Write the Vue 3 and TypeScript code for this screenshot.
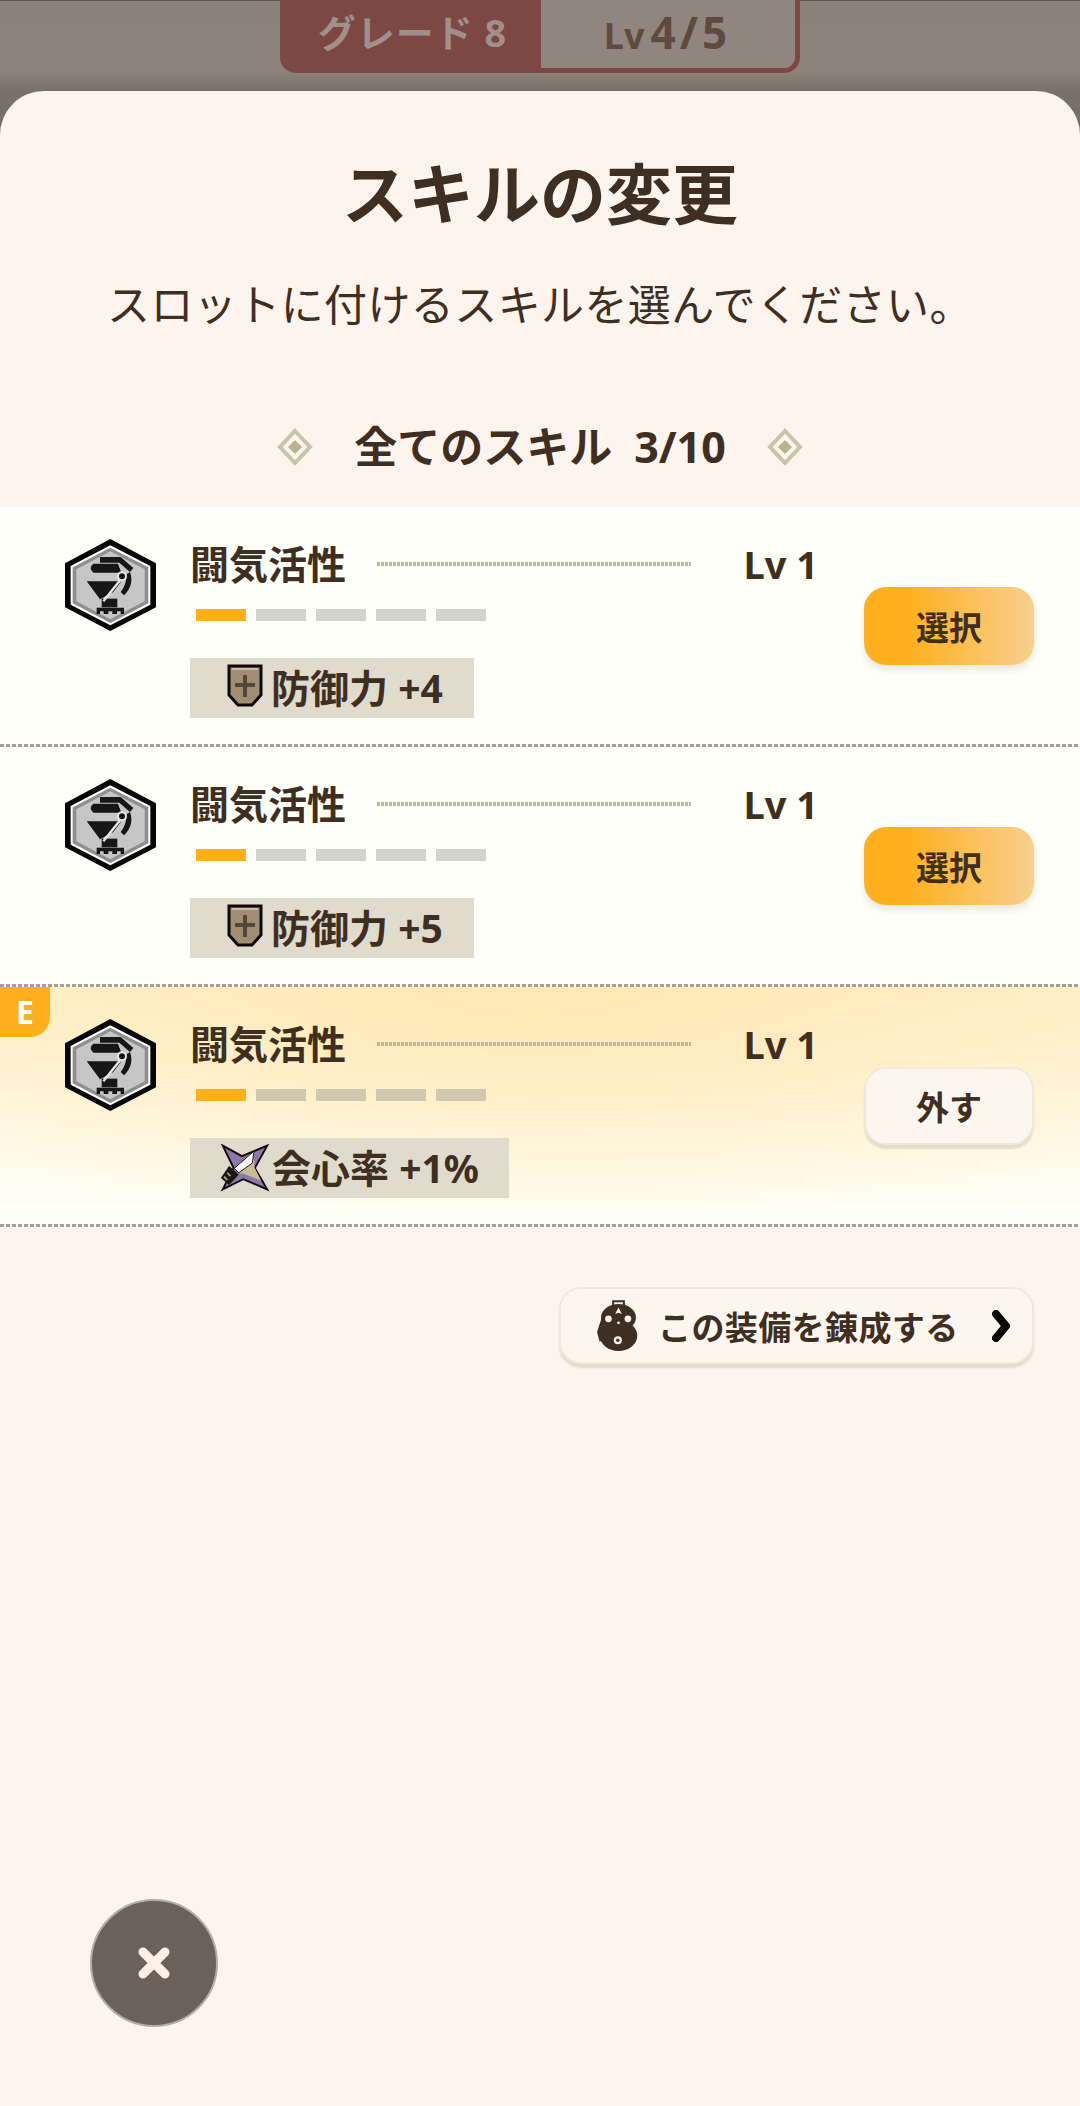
<script setup lang="ts">
interface Skill {
  stat: string
  statIcon: 'shield' | 'crit'
  equipped: boolean
}

const skills: Skill[] = [
  { stat: '防御力 +4', statIcon: 'shield', equipped: false },
  { stat: '防御力 +5', statIcon: 'shield', equipped: false },
  { stat: '会心率 +1%', statIcon: 'crit', equipped: true },
]
</script>

<template>
  <div class="page">
    <div class="grade">
      <span class="grade__left">グレード 8</span>
      <span class="grade__right">Lv<span class="grade__num">4/5</span></span>
    </div>

    <main class="sheet">
      <h1 class="sheet__title">スキルの変更</h1>
      <p class="sheet__sub">スロットに付けるスキルを選んでください。</p>

      <div class="section">
        <svg class="section__mark" viewBox="0 0 36 38">
          <path d="M18 3 33 19 18 35 3 19Z" fill="none" stroke="#cbc4aa" stroke-width="4" />
          <path d="M18 12 25 19 18 26 11 19Z" fill="#bdb08c" />
        </svg>
        <h2 class="section__title">全てのスキル<span class="section__count">3/10</span></h2>
        <svg class="section__mark" viewBox="0 0 36 38">
          <path d="M18 3 33 19 18 35 3 19Z" fill="none" stroke="#cbc4aa" stroke-width="4" />
          <path d="M18 12 25 19 18 26 11 19Z" fill="#bdb08c" />
        </svg>
      </div>

      <div class="list">
        <template v-for="(skill, i) in skills" :key="i">
          <div class="row" :class="{ 'row--on': skill.equipped }">
            <span v-if="skill.equipped" class="row__badge">E</span>

            <svg class="row__icon" viewBox="45 27 273 276">
              <polygon points="181,27 318,100 318,232 181,303 45,232 45,100" fill="#050505" />
              <polygon points="181,46 301,108 301,224 181,286 62,224 62,108" fill="#fff" />
              <polygon points="181,53 295,112 295,220 181,279 68,220 68,112" fill="#8f8f8f" />
              <polygon points="181,64 284,118 284,214 181,268 79,214 79,118" fill="#c6c6c6" />
              <path d="M150 81H212L250 114 240 126 208 98H150Z" fill="#161616" />
              <path d="M130 101H204L214 128H130Q114 114 130 101Z" fill="#161616" />
              <path d="M110 154H214L190 186 150 208Z" fill="#161616" />
              <path d="M240 126Q254 165 222 196L212 186Q232 160 228 134Z" fill="#161616" />
              <path d="M155 206H202V232H155Z" fill="#161616" />
              <path d="M140 233H222V252H212V244H201V252H187V244H175V252H161V244H150V252H140Z" fill="#161616" />
              <path d="M160 214 214 146" stroke="#e8e8e8" stroke-width="7" fill="none" />
              <circle cx="216" cy="139" r="12" fill="#161616" stroke="#e8e8e8" stroke-width="6" />
            </svg>

            <div class="row__body">
              <div class="row__head">
                <span class="row__name">闘気活性</span>
                <span class="row__dots"></span>
                <span class="row__lv">Lv 1</span>
              </div>
              <div class="pips">
                <span v-for="n in 5" :key="n" class="pip" :class="{ 'pip--on': n === 1 }"></span>
              </div>
              <div class="stat" :class="{ 'stat--wide': skill.statIcon === 'crit' }">
                <svg v-if="skill.statIcon === 'shield'" class="stat__shield" viewBox="0 0 36 43">
                  <path d="M2 2H34V31L25 41H11L2 31Z" fill="#a08d73" stroke="#0c0a08" stroke-width="3" />
                  <path d="M5 5H31" stroke="#c9bda8" stroke-width="2" />
                  <path d="M18 11V33M8 21H28" stroke="#55463a" stroke-width="4" fill="none" />
                </svg>
                <svg v-else class="stat__crit" viewBox="60 40 155 150">
                  <polygon points="68,45 128,78 207,45 168,115 207,182 132,150 68,182 102,115" fill="#8d78a8" stroke="#0d0a10" stroke-width="6" />
                  <polygon points="165,85 168,115 188,155 132,132 118,132" fill="#c9bb94" />
                  <polygon points="166,62 160,100 118,130 104,116" fill="#fff" stroke="#17130f" stroke-width="3" />
                  <polygon points="88,108 118,136 88,168 62,146" fill="#1b1713" />
                  <path d="M82 130 92 141M72 142 82 152" stroke="#b9ad8f" stroke-width="5" />
                </svg>
                <span>{{ skill.stat }}</span>
              </div>
            </div>

            <button class="row__btn" :class="{ 'row__btn--off': skill.equipped }">
              {{ skill.equipped ? '外す' : '選択' }}
            </button>
          </div>
          <div class="rule"></div>
        </template>
      </div>

      <div class="refine-wrap">
        <button class="refine">
          <svg class="refine__icon" viewBox="25 0 125 152">
            <path d="M76 16V4H108V16" fill="none" stroke="#3f2e22" stroke-width="6" />
            <ellipse cx="92" cy="52" rx="52" ry="40" fill="#3f2e22" />
            <ellipse cx="92" cy="106" rx="56" ry="46" fill="#3f2e22" />
            <path d="M46 40 28 95 36 125 52 110Z" fill="#3f2e22" />
            <path d="M92 22 102 42 92 38 82 42Z" fill="#fdf6ef" />
            <circle cx="62" cy="56" r="10" fill="#fdf6ef" />
            <circle cx="120" cy="56" r="10" fill="#fdf6ef" />
            <circle cx="92" cy="68" r="4" fill="#fdf6ef" />
            <circle cx="90" cy="120" r="12" fill="#fdf6ef" />
            <circle cx="90" cy="120" r="5" fill="#3f2e22" />
          </svg>
          <span class="refine__text">この装備を錬成する</span>
          <svg class="refine__chev" viewBox="0 0 18 32">
            <path d="M4 4 14 16 4 28" fill="none" stroke="#050505" stroke-width="8" stroke-linecap="round" stroke-linejoin="round" />
          </svg>
        </button>
      </div>

      <button class="close" aria-label="閉じる">
        <svg viewBox="0 0 34 34" class="close__x">
          <path d="M6 6 28 28M28 6 6 28" stroke="#fdf0e4" stroke-width="9" stroke-linecap="round" />
        </svg>
      </button>
    </main>
  </div>
</template>

<style scoped>
.page {
  height: 2106px;
  display: flex;
  flex-direction: column;
  overflow: hidden;
  font-family: "Noto Sans", "Noto Sans CJK JP", sans-serif;
  color: #3f2e22;
  background: linear-gradient(#5c5550 0, #5c5550 1px, #8b8178 1px, #8e847b 70px, #7b7067 91px);
}

.grade {
  align-self: center;
  display: flex;
  width: 520px;
  height: 73px;
  margin-left: -1px;
  flex-shrink: 0;
  box-sizing: border-box;
  border: 5px solid #7d4743;
  border-top: 0;
  border-radius: 0 0 16px 16px;
  overflow: hidden;
  font-weight: 700;
  font-size: 38px;
  line-height: 64px;
}

.grade__left {
  width: 256px;
  background: #7d4743;
  color: #a08f8a;
  text-align: center;
  letter-spacing: 1px;
}

.grade__right {
  flex: 1;
  background: #91867f;
  color: #5f4a3f;
  text-align: center;
  font-size: 36px;
}

.grade__num {
  margin-left: 6px;
  font-size: 44px;
  letter-spacing: 4px;
}

.sheet {
  flex: 1;
  display: flex;
  flex-direction: column;
  background: #fdf4ed;
  border-radius: 44px 44px 0 0;
  margin-top: 18px;
}

.sheet__title {
  margin: 0;
  padding-top: 57px;
  font-size: 66px;
  line-height: 90px;
  font-weight: 700;
  text-align: center;
}

.sheet__sub {
  margin: 36px 0 0;
  font-size: 43px;
  line-height: 62px;
  font-weight: 400;
  text-align: center;
  letter-spacing: 0.4px;
}

.section {
  display: flex;
  justify-content: center;
  align-items: center;
  gap: 41px;
  height: 60px;
  margin-top: 81px;
}

.section__mark {
  width: 36px;
  height: 38px;
}

.section__title {
  margin: 0;
  font-size: 43px;
  line-height: 60px;
  font-weight: 700;
}

.section__count {
  margin-left: 22px;
}

.list {
  margin-top: 30px;
}

.row {
  position: relative;
  display: flex;
  align-items: center;
  height: 237px;
  padding: 0 46px 0 65px;
  background: #fefff8;
}

.row--on {
  background:
    radial-gradient(ellipse 75% 100% at 50% 0, #ffe8b4 0%, rgba(255, 232, 180, 0) 100%),
    linear-gradient(#fff0cc, #fefff8 100%);
}

.rule {
  height: 3px;
  background: repeating-linear-gradient(90deg, #a5a196 0 4px, transparent 4px 6px);
}

.row__badge {
  position: absolute;
  left: 0;
  top: 0;
  width: 50px;
  height: 50px;
  background: #ffb01c;
  border-radius: 0 0 20px 0;
  color: #fff;
  font-size: 32px;
  line-height: 50px;
  font-weight: 700;
  text-align: center;
}

.row__icon {
  align-self: flex-start;
  width: 91px;
  height: 92px;
  margin-top: 32px;
  flex-shrink: 0;
}

.row__body {
  align-self: flex-start;
  width: 628px;
  margin-left: 34px;
  padding-top: 31px;
}

.row__head {
  display: flex;
  align-items: center;
  height: 52px;
}

.row__name {
  font-size: 39px;
  font-weight: 700;
  line-height: 52px;
}

.row__dots {
  width: 314px;
  height: 4px;
  margin-left: 31px;
  background: repeating-linear-gradient(90deg, #bdb59c 0 3px, transparent 3px 4px);
}

.row__lv {
  margin-left: auto;
  font-size: 38px;
  font-weight: 700;
  line-height: 52px;
}

.pips {
  display: flex;
  gap: 10px;
  margin: 19px 0 0 6px;
}

.pip {
  width: 50px;
  height: 12px;
  background: #d2d4cd;
}

.row--on .pip {
  background: #d1c8b0;
}

.pip.pip--on,
.row--on .pip.pip--on {
  background: #ffb01c;
}

.stat {
  display: flex;
  align-items: center;
  gap: 8px;
  width: 284px;
  height: 60px;
  margin-top: 37px;
  padding-left: 37px;
  box-sizing: border-box;
  background: #dfdccd;
  font-size: 39px;
  line-height: 56px;
  font-weight: 700;
}

.stat--wide {
  width: 319px;
  padding-left: 30px;
  gap: 2px;
}

.stat__shield {
  width: 36px;
  height: 43px;
  margin-top: -6px;
}

.stat__crit {
  width: 50px;
  height: 48px;
}

.row__btn {
  margin-left: auto;
  width: 170px;
  height: 78px;
  padding: 0;
  border: 0;
  border-radius: 22px;
  background: linear-gradient(90deg, #ffb01c 25%, #f8cf8f 100%);
  box-shadow: 0 5px 6px rgba(120, 100, 70, 0.14);
  font-family: inherit;
  font-size: 33px;
  font-weight: 700;
  color: #3f2e22;
}

.row__btn--off {
  background: #fdf6ef;
  border: 2px solid #f2e8da;
  box-shadow: 0 4px 2px #e6dccb;
}

.refine-wrap {
  display: flex;
  justify-content: flex-end;
  margin-top: 60px;
  padding-right: 46px;
}

.refine {
  display: flex;
  align-items: center;
  width: 475px;
  height: 77px;
  padding: 0 22px 0 35px;
  border: 2px solid #f2e8da;
  border-radius: 22px;
  background: #fdf6ef;
  box-shadow: 0 4px 2px #e6dccb;
  font-family: inherit;
  color: #3f2e22;
}

.refine__icon {
  width: 42px;
  height: 51px;
  flex-shrink: 0;
}

.refine__text {
  margin-left: 20px;
  font-size: 33px;
  font-weight: 700;
  letter-spacing: 0.4px;
  white-space: nowrap;
}

.refine__chev {
  width: 18px;
  height: 32px;
  margin-left: auto;
}

.close {
  display: flex;
  align-items: center;
  justify-content: center;
  width: 128px;
  height: 128px;
  margin: auto 0 79px 90px;
  padding: 0;
  box-sizing: border-box;
  background: #6b615b;
  border: 2px solid #b5aca6;
  border-radius: 50%;
}

.close__x {
  width: 34px;
  height: 34px;
}
</style>
